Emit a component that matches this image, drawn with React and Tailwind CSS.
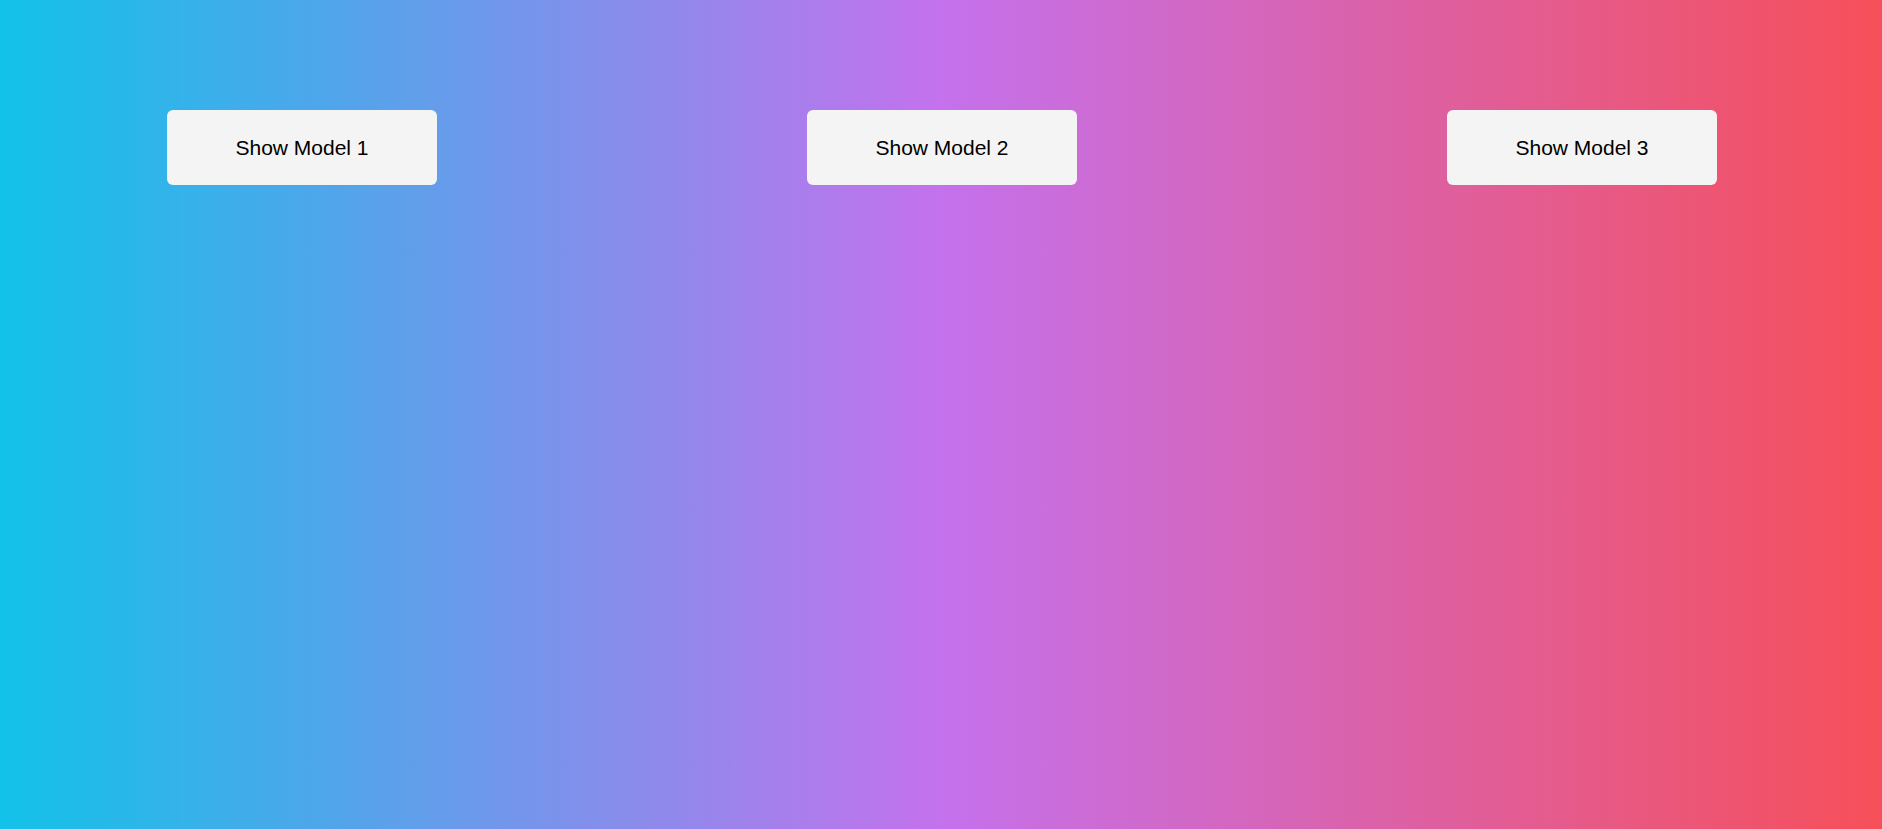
export default function App() {
  const models = [1, 2, 3];

  return (
    <div className="min-h-screen w-full bg-[linear-gradient(to_right,#12c2e9,#c471ed,#f64f59)] font-['Liberation_Sans',Arial,sans-serif]">
      {/* model buttons row */}
      <div className="flex justify-between pl-[167px] pr-[165px] pt-[110px]">
        {models.map((n) => (
          <button
            key={n}
            type="button"
            className="w-[270px] h-[75px] rounded-md bg-[#f4f4f4] text-[21px] text-black cursor-pointer"
          >
            Show Model {n}
          </button>
        ))}
      </div>
    </div>
  );
}
